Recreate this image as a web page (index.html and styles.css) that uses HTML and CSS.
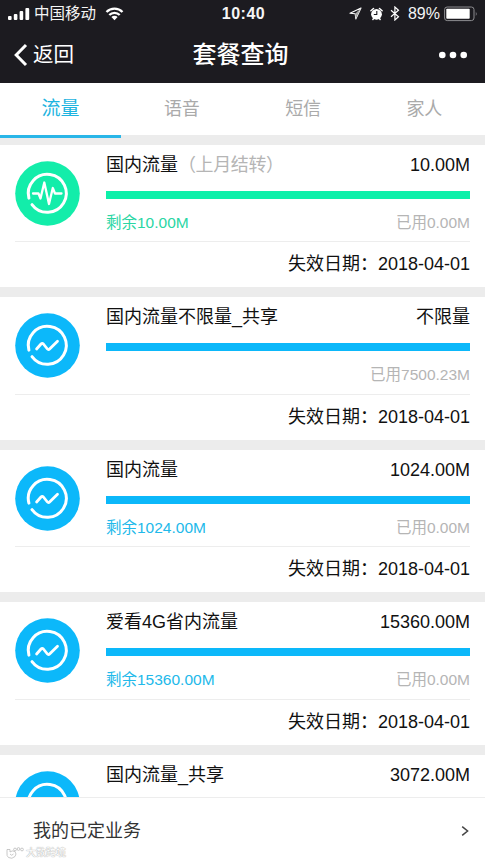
FILE: index.html
```html
<!DOCTYPE html>
<html lang="zh-CN">
<head>
    <meta charset="UTF-8">
    <meta name="viewport" content="width=device-width, initial-scale=1.0">
    <title>套餐查询</title>
    <link rel="stylesheet" href="styles.css">
</head>
<body>
    <!-- Shared icons -->
    <svg class="symbols" aria-hidden="true">
        <symbol id="icon-data" viewBox="0 0 65 65">
            <circle cx="32.5" cy="32.5" r="32.3" fill="currentColor"/>
            <g fill="none" stroke="#fff" stroke-linecap="round" stroke-linejoin="round">
                <path d="M13.9 37.1A19 19 0 1 1 17 43.6" stroke-width="3"/>
                <path d="M21.6 36L26 31Q27.2 29.8 28.4 31L32.4 36Q33.4 37.2 34.6 36L42.5 28.3" stroke-width="2.8"/>
            </g>
        </symbol>
        <symbol id="icon-pulse" viewBox="0 0 65 65">
            <circle cx="32.5" cy="32.5" r="32.3" fill="currentColor"/>
            <g fill="none" stroke="#fff" stroke-linecap="round" stroke-linejoin="round">
                <path d="M13.9 37.1A19 19 0 1 1 17 43.6" stroke-width="3"/>
                <path d="M18 32.5H23.5L25.5 37.5L29.3 21.5L34 43L37.8 27L40 32.5H46.5" stroke-width="2.3"/>
            </g>
        </symbol>
    </svg>

    <div class="app">
        <div class="status-bar">
            <div class="status-left">
                <svg class="signal" width="22" height="14" viewBox="0 0 22 14" fill="#fff">
                    <rect x="0" y="9" width="3.6" height="4" rx="1"/>
                    <rect x="5.8" y="7" width="3.6" height="6" rx="1"/>
                    <rect x="11.6" y="4" width="3.6" height="9" rx="1"/>
                    <rect x="17.4" y="1" width="3.8" height="12" rx="1"/>
                </svg>
                <span>中国移动</span>
                <svg class="wifi" width="19" height="14" viewBox="0 0 19 14">
                    <path d="M1.5 5A11.3 11.3 0 0 1 17.5 5M4.3 8A7.3 7.3 0 0 1 14.7 8" fill="none" stroke="#fff" stroke-width="2.3"/>
                    <path d="M9.5 13.2L6.4 10.1A4.4 4.4 0 0 1 12.6 10.1Z" fill="#fff"/>
                </svg>
            </div>
            <div class="clock">10:40</div>
            <div class="status-right">
                <svg width="13" height="13" viewBox="0 0 13 13">
                    <path d="M12 1L1 6.3L6.2 6.8L6.8 12Z" fill="none" stroke="#fff" stroke-width="1.1" stroke-linejoin="round"/>
                    <path d="M12 1L6.2 6.8L6.8 12Z" fill="#aaa"/>
                </svg>
                <svg class="alarm" width="13" height="14" viewBox="0 0 13 14">
                    <circle cx="6.5" cy="7.3" r="5.4" fill="#fff"/>
                    <path d="M.9 3.7L3.5 1.5M12.1 3.7L9.5 1.5M2.9 12.4L3.6 11.6M10.1 12.4L9.4 11.6" stroke="#fff" stroke-width="1.5" stroke-linecap="round"/>
                    <path d="M6.8 4.1V7.5H3.8" fill="none" stroke="#1c1b20" stroke-width="1.1"/>
                </svg>
                <svg class="bluetooth" width="10" height="15" viewBox="0 0 10 15">
                    <path d="M1 4.2L8.5 10.8L4.9 14V1L8.5 4.2L1 10.8" fill="none" stroke="#fff" stroke-width="1.2"/>
                </svg>
                <span class="percent">89%</span>
                <svg class="battery" width="34" height="16" viewBox="0 0 34 16">
                    <rect x=".6" y="1" width="29.4" height="13.6" rx="2.6" fill="none" stroke="#8d8d90"/>
                    <rect x="2.3" y="2.8" width="23.4" height="10" rx=".8" fill="#fff"/>
                    <path d="M31.8 5.5Q33.6 7.8 31.8 10.1Z" fill="#8d8d90"/>
                </svg>
            </div>
        </div>

        <div class="nav-bar">
            <div class="back">
                <svg width="14" height="24" viewBox="0 0 14 24">
                    <path d="M12 2L2.2 12L12 22" fill="none" stroke="#fff" stroke-width="3"/>
                </svg>
                <span>返回</span>
            </div>
            <h1>套餐查询</h1>
            <div class="more">
                <svg width="28" height="8" viewBox="0 0 28 8" fill="#fff">
                    <circle cx="3.3" cy="4" r="3.3"/>
                    <circle cx="14" cy="4" r="3.3"/>
                    <circle cx="24.7" cy="4" r="3.3"/>
                </svg>
            </div>
        </div>

        <div class="tabs">
            <div class="tab active">流量</div>
            <div class="tab">语音</div>
            <div class="tab">短信</div>
            <div class="tab">家人</div>
        </div>

        <div class="list">
            <div class="card green">
                <div class="usage">
                    <svg class="icon"><use href="#icon-pulse"/></svg>
                    <div class="details">
                        <div class="row title"><span>国内流量<span class="note">（上月结转）</span></span><span>10.00M</span></div>
                        <div class="bar"></div>
                        <div class="row meta"><span class="left">剩余10.00M</span><span>已用0.00M</span></div>
                    </div>
                </div>
                <div class="expiry">失效日期：2018-04-01</div>
            </div>

            <div class="card">
                <div class="usage">
                    <svg class="icon"><use href="#icon-data"/></svg>
                    <div class="details">
                        <div class="row title"><span>国内流量不限量_共享</span><span>不限量</span></div>
                        <div class="bar"></div>
                        <div class="row meta"><span class="left"></span><span>已用7500.23M</span></div>
                    </div>
                </div>
                <div class="expiry">失效日期：2018-04-01</div>
            </div>

            <div class="card">
                <div class="usage">
                    <svg class="icon"><use href="#icon-data"/></svg>
                    <div class="details">
                        <div class="row title"><span>国内流量</span><span>1024.00M</span></div>
                        <div class="bar"></div>
                        <div class="row meta"><span class="left">剩余1024.00M</span><span>已用0.00M</span></div>
                    </div>
                </div>
                <div class="expiry">失效日期：2018-04-01</div>
            </div>

            <div class="card">
                <div class="usage">
                    <svg class="icon"><use href="#icon-data"/></svg>
                    <div class="details">
                        <div class="row title"><span>爱看4G省内流量</span><span>15360.00M</span></div>
                        <div class="bar"></div>
                        <div class="row meta"><span class="left">剩余15360.00M</span><span>已用0.00M</span></div>
                    </div>
                </div>
                <div class="expiry">失效日期：2018-04-01</div>
            </div>

            <div class="card">
                <div class="usage">
                    <svg class="icon"><use href="#icon-data"/></svg>
                    <div class="details">
                        <div class="row title"><span>国内流量_共享</span><span>3072.00M</span></div>
                    </div>
                </div>
            </div>
        </div>

        <div class="footer">
            <span>我的已定业务</span>
            <svg width="8" height="12" viewBox="0 0 8 12">
                <path d="M1.2 1.6L6.6 6L1.2 10.4" fill="none" stroke="#444" stroke-width="1.5"/>
            </svg>
            <div class="watermark">
                <svg width="18" height="13" viewBox="0 0 18 13" fill="#fff" stroke="#bbb" stroke-width=".8">
                    <path d="M1 2.5H4V5Q6 3 9 4.5Q11 7 9 9.5Q6 12.5 2.5 10.5Q.5 9 1 6Z"/>
                    <path d="M4 7Q5.5 9.5 7.5 7" fill="none"/>
                    <circle cx="9" cy="2.5" r="1.4"/>
                    <circle cx="12.5" cy="2" r="1.4"/>
                    <circle cx="16" cy="2.5" r="1.4"/>
                </svg>
                <span>大数跨境</span>
            </div>
        </div>
    </div>
</body>
</html>
```

FILE: styles.css
```css
* {
    margin: 0;
    padding: 0;
    box-sizing: border-box;
}

body {
    font-family: "Liberation Sans", "Noto Sans CJK SC", sans-serif;
    background: #ececec;
    color: #111;
}

svg {
    display: block;
    flex-shrink: 0;
}

.symbols {
    display: none;
}

.app {
    height: 863px;
    display: flex;
    flex-direction: column;
    overflow: hidden;
}

/* Status bar */
.status-bar {
    height: 27px;
    padding: 0 7px 0 8px;
    background: #1c1b20;
    color: #f5f5f5;
    font-size: 16px;
    line-height: 27px;
    display: grid;
    grid-template-columns: 1fr auto 1fr;
    flex-shrink: 0;
}

.status-left,
.status-right {
    display: flex;
    align-items: center;
}

.status-left {
    font-size: 15.5px;
}

.signal {
    margin-right: 4px;
}

.wifi {
    margin-left: 9px;
}

.clock {
    padding-left: 1px;
    font-weight: bold;
    letter-spacing: 0.5px;
}

.status-right {
    justify-content: flex-end;
}

.alarm {
    margin-left: 8px;
}

.bluetooth {
    margin: 0 8px 0 7px;
}

.battery {
    margin-left: 4px;
}

/* Navigation */
.nav-bar {
    height: 56px;
    padding: 0 18px 0 14px;
    background: #1c1b20;
    color: #fff;
    display: grid;
    grid-template-columns: 1fr auto 1fr;
    align-items: center;
    flex-shrink: 0;
}

.nav-bar h1 {
    font-size: 24px;
    font-weight: 500;
    line-height: 56px;
}

.back {
    display: flex;
    align-items: center;
    gap: 5px;
    font-size: 20.5px;
    line-height: 56px;
}

.more {
    justify-self: end;
}

/* Tabs */
.tabs {
    height: 52px;
    background: #fff;
    display: grid;
    grid-template-columns: repeat(4, 1fr);
    flex-shrink: 0;
}

.tab {
    color: #aaa;
    font-size: 18px;
    line-height: 52px;
    text-align: center;
}

.tab.active {
    color: #1db4e0;
    font-size: 19px;
    border-bottom: 3px solid #29b6e8;
}

/* Data packages */
.list {
    flex: 1;
    min-height: 0;
    padding-top: 9.7px;
    overflow: hidden;
}

.card {
    height: 142.5px;
    margin-bottom: 10px;
    padding: 0 15px;
    background: #fff;
    color: #111;
}

.usage {
    height: 97.5px;
    border-bottom: 1px solid #ededed;
    display: flex;
}

.icon {
    width: 65px;
    height: 65px;
    margin: 16px 26px 0 0;
    color: #0cb8fa;
}

.details {
    flex: 1;
}

.row {
    display: flex;
    justify-content: space-between;
}

.title {
    padding: 6px 0 12px;
    font-size: 18px;
    line-height: 28px;
}

.note {
    color: #b5b5b5;
    letter-spacing: -0.4px;
}

.bar {
    height: 8px;
    background: #0cb8fa;
}

.meta {
    margin-top: 12px;
    color: #b5b5b5;
    font-size: 15.5px;
    line-height: 24px;
}

.meta .left {
    color: #22b9ea;
}

.green .icon {
    color: #13edaa;
}

.green .bar {
    background: #0cf0a9;
}

.green .meta .left {
    color: #2ad6a4;
}

.expiry {
    font-size: 18px;
    line-height: 45px;
    text-align: right;
}

/* Footer */
.footer {
    position: relative;
    height: 66px;
    padding: 0 16px 0 33px;
    background: #fff;
    border-top: 1px solid #ededed;
    color: #333;
    font-size: 18px;
    line-height: 64px;
    display: flex;
    align-items: center;
    justify-content: space-between;
    flex-shrink: 0;
}

.watermark {
    position: absolute;
    left: 6px;
    bottom: 3px;
    display: flex;
    align-items: center;
    gap: 2px;
    color: #fff;
    font-size: 10px;
    line-height: 14px;
    text-shadow: 0 0 1px #aaa, 0 0 1px #aaa;
}
```
